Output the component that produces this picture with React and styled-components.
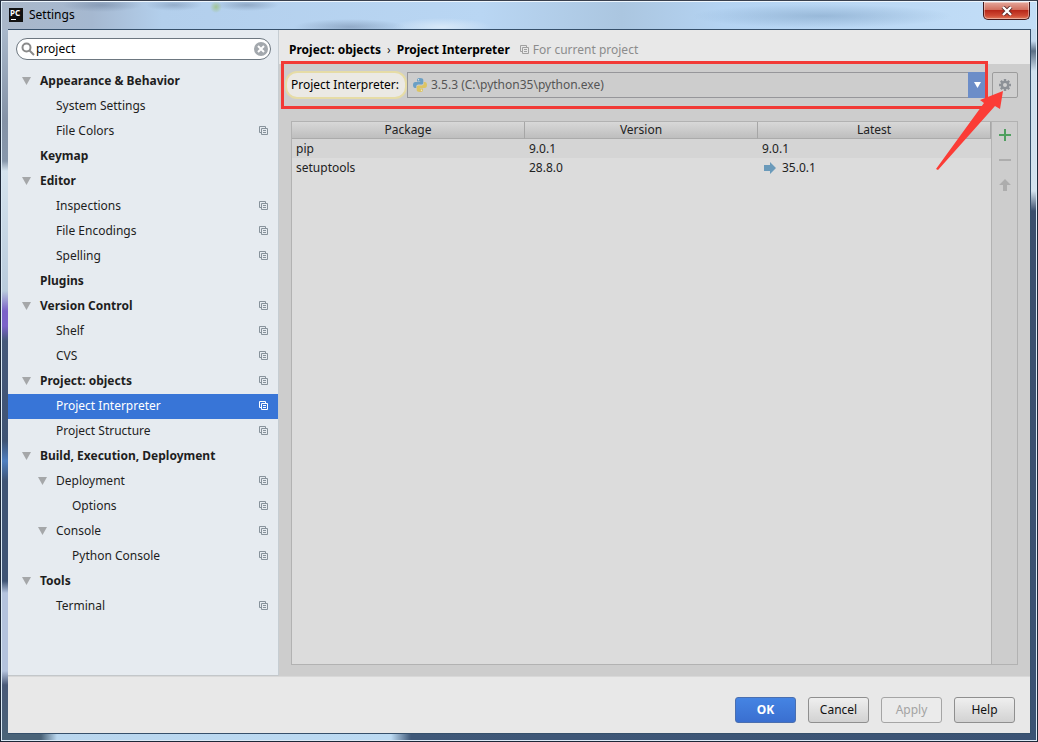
import React, { useState } from "react";
import styled, { createGlobalStyle } from "styled-components";

const GlobalStyle = createGlobalStyle`
  * {
    box-sizing: border-box;
  }
  body {
    margin: 0;
    font-family: "Noto Sans", "Open Sans", sans-serif;
    font-size: 12px;
    line-height: 18px;
    color: #222;
  }
  button,
  input,
  select {
    font: inherit;
    color: inherit;
  }
`;

const Window = styled.div`
  display: flex;
  flex-direction: column;
  min-height: 100vh;
  padding: 0 6px 7px 7px;
  border: 1px solid #1d2838;
  border-top-color: #39404e;
  box-shadow: inset 0 0 0 1px #dcebf7;
  background:
    linear-gradient(to right, #4a6378 40px, #b9d6ee 56px, #bcdaf2 390px, #3f5878 410px, #3b5374)
      bottom / 100% 8px no-repeat,
    linear-gradient(#c3d9ee 0, #c3d9ee 40px, #5b6f85 50px, #cfe0ee 70px, #d3e2ee 190px, #3b4f6d 210px, #3b5374)
      right / 8px 100% no-repeat,
    linear-gradient(
        #b4c4d6 0, #8492a6 120px, #8797ab 160px, #d5e3ee 170px, #b9cbdc 290px,
        #7b62c8 310px, #7b62c8 325px, #46597a 340px, #3f5474 440px, #4f7fc0 460px,
        #3f5474 480px, #3f5474 580px, #b4c3dd 592px, #b4c3dd 670px, #4a5a78 684px, #4a6378
      )
      left / 8px 100% no-repeat,
    #b5cfe9;
`;

const TitleBar = styled.header`
  display: flex;
  align-items: flex-start;
  height: 28px;
  margin: 0 -5px 0 -6px;
  padding: 0 6px 0 7px;
  border-top: 1px solid #eef6fd;
  background:
    radial-gradient(ellipse 40px 7px at 100px 3px, rgba(90, 110, 140, 0.4), transparent),
    radial-gradient(ellipse 28px 6px at 172px 3px, rgba(90, 110, 140, 0.35), transparent),
    radial-gradient(ellipse 6px 6px at 214px 5px, rgba(150, 190, 90, 0.6), transparent),
    radial-gradient(ellipse 32px 6px at 245px 3px, rgba(90, 110, 140, 0.4), transparent),
    radial-gradient(ellipse 56px 8px at 348px 25px, rgba(90, 110, 140, 0.4), transparent),
    radial-gradient(ellipse 50px 9px at 440px 25px, rgba(225, 238, 250, 0.8), transparent),
    radial-gradient(ellipse 130px 12px at 820px 14px, rgba(120, 155, 190, 0.5), transparent),
    linear-gradient(to right, #a9b7c9, #a5b8d0 90px, #b3cfec 160px, #b9d6f3 480px, #abc6e0 620px, #b4d3f2 720px, #c3def7);
`;

const AppIcon = styled.svg`
  width: 14px;
  height: 14px;
  margin: 6px 6px 0 0;
`;

const WindowTitle = styled.h1`
  flex: 1;
  margin: 4px 0 0;
  font-size: 12px;
  font-weight: 400;
  color: #000;
`;

const CloseButton = styled.button`
  display: flex;
  align-items: center;
  justify-content: center;
  width: 47px;
  height: 18px;
  padding: 0;
  border: 1px solid #43181a;
  border-top: 0;
  border-radius: 0 0 5px 5px;
  background: linear-gradient(#e5a89c, #d2705f 45%, #b8281a 50%, #cf4a34 80%, #e07a5c);
  box-shadow: inset 0 0 0 1px rgba(255, 255, 255, 0.4);
`;

const Dialog = styled.div`
  flex: 1;
  display: flex;
  flex-direction: column;
  border: 1px solid #36506b;
  border-width: 1px 1px 1px 0;
  background: #e8e8e8;
`;

const Body = styled.div`
  flex: 1;
  display: flex;
`;

const Sidebar = styled.aside`
  width: 271px;
  flex-shrink: 0;
  border-right: 1px solid #c6cdd2;
  border-bottom: 1px solid #c3c7ca;
  background: #e6ebf0;
`;

const SearchBox = styled.label`
  display: flex;
  align-items: center;
  gap: 1px;
  height: 22px;
  margin: 8px 7px 9px 8px;
  padding: 0 2px 0 4px;
  border: 1px solid #6d7780;
  border-radius: 11px;
  background: #fff;
`;

const SearchInput = styled.input`
  flex: 1;
  min-width: 0;
  padding: 0;
  border: 0;
  outline: 0;
  background: transparent;
  color: #000;
`;

const ClearButton = styled.button`
  display: flex;
  padding: 0;
  border: 0;
  background: none;
`;

const Tree = styled.ul`
  margin: 0;
  padding: 0;
  list-style: none;
`;

const TreeRow = styled.button`
  display: flex;
  align-items: center;
  width: 100%;
  height: 25px;
  padding: 0 10px 2px ${({ $depth }) => 14 + $depth * 16}px;
  border: 0;
  text-align: left;
  font-weight: ${({ $depth }) => ($depth === 0 ? 700 : 400)};
  color: ${({ $selected }) => ($selected ? "#fff" : "#1e1e1e")};
  background: ${({ $selected }) => ($selected ? "#3875d7" : "transparent")};
`;

const Toggle = styled.svg`
  width: 10px;
  height: 8px;
  margin-right: 8px;
  fill: #a5a7a9;
`;

const TreeLabel = styled.span`
  flex: 1;
  white-space: nowrap;
`;

const Main = styled.main`
  flex: 1;
  min-width: 0;
  display: flex;
  flex-direction: column;
  background: #cdcdcd;
`;

const Breadcrumb = styled.div`
  display: flex;
  align-items: center;
  height: 34px;
  padding: 5px 0 0 10px;
  background: #e8e8e8;
  white-space: nowrap;
`;

const Crumb = styled.strong`
  color: #000;
`;

const Chevron = styled.span`
  padding: 0 6px;
`;

const Scope = styled.span`
  display: flex;
  align-items: center;
  gap: 4px;
  margin-left: 10px;
  color: #8c8c8c;
`;

const InterpreterRow = styled.div`
  position: relative;
  display: flex;
  align-items: center;
  padding: 7px 12px 0 6px;
`;

const FieldLabel = styled.label`
  width: 122px;
  height: 28px;
  padding: 3px 0 0 4px;
  border: 2px solid #e6dca6;
  border-radius: 12px;
  background: #ebe9e4;
  color: #000;
  white-space: nowrap;
`;

const Combo = styled.div`
  flex: 1;
  display: flex;
  align-items: center;
  height: 26px;
  padding-left: 4px;
  border: 1px solid #96969a;
  color: #555;
`;

const ComboSelect = styled.select`
  flex: 1;
  min-width: 0;
  height: 24px;
  padding: 0 3px;
  border: 0;
  appearance: none;
  background: transparent;
`;

const ComboArrow = styled.span`
  display: flex;
  align-items: center;
  justify-content: center;
  width: 19px;
  height: 26px;
  background: #6c8dc8;
`;

const GearButton = styled.button`
  display: flex;
  align-items: center;
  justify-content: center;
  width: 26px;
  height: 26px;
  margin-left: 4px;
  padding: 0;
  border: 1px solid #9c9c9c;
  border-radius: 2px;
  background: #cfcfcf;
`;

const Highlight = styled.div`
  position: absolute;
  top: -3px;
  left: 2px;
  right: 42px;
  height: 48px;
  border: 3px solid #f23a36;
  pointer-events: none;
`;

const Pointer = styled.svg`
  position: absolute;
  top: 27px;
  right: 26px;
  width: 68px;
  height: 80px;
  fill: #fb3c36;
  pointer-events: none;
`;

const PackagePanel = styled.section`
  flex: 1;
  display: flex;
  margin: 22px 12px 11px;
  border: 1px solid #b2b2b2;
`;

const TableArea = styled.div`
  flex: 1;
  background: #dcdcdc;
`;

const PackageTable = styled.table`
  width: 100%;
  table-layout: fixed;
  border-collapse: separate;
  border-spacing: 0;
`;

const HeadCell = styled.th`
  height: 17px;
  padding: 0;
  border-right: 1px solid #a6a6a6;
  border-bottom: 1px solid #ababab;
  background: linear-gradient(#d8d8d8, #bebebe);
  font-weight: 400;
  line-height: 16px;
`;

const PackageRow = styled.tr`
  background: ${({ $striped }) => ($striped ? "#d5d5d5" : "transparent")};
`;

const Cell = styled.td`
  height: 19px;
  padding: 0 4px;
  line-height: 19px;
`;

const Upgrade = styled.span`
  display: flex;
  align-items: center;
  gap: 6px;
  padding-left: 2px;
`;

const Actions = styled.div`
  display: flex;
  flex-direction: column;
  width: 26px;
  border-left: 1px solid #b2b2b2;
`;

const ActionButton = styled.button`
  display: flex;
  align-items: center;
  justify-content: center;
  height: 25px;
  padding: 0;
  border: 0;
  background: none;
`;

const Footer = styled.footer`
  display: flex;
  justify-content: flex-end;
  gap: 12px;
  height: 57px;
  padding: 20px 15px 0;
  border-top: 1px solid #d8d8d8;
`;

const DialogButton = styled.button`
  width: 61px;
  height: 26px;
  padding: 0;
  border: 1px solid ${({ $primary }) => ($primary ? "#4a6fb0" : "#8f8f8f")};
  border-radius: 3px;
  background: ${({ $primary }) =>
    $primary ? "linear-gradient(#4584e3, #3a6fd0)" : "linear-gradient(#efefef, #d2d2d2)"};
  color: ${({ $primary }) => ($primary ? "#fff" : "#111")};
  font-weight: ${({ $primary }) => ($primary ? 700 : 400)};

  &:disabled {
    border-color: #a5a5a5;
    background: #ebebeb;
    color: #a3a3a3;
  }
`;

const CopyIcon = ({ color = "#87929b" }) => (
  <svg width="9" height="9" viewBox="0 0 9 9" fill="none" stroke={color}>
    <path d="M2.5 6.5h-2v-6h6v2" />
    <path d="M2.5 2.5h6v6h-6z" />
    <path d="M4 4.5h3M4 6.5h3" />
  </svg>
);

const PythonIcon = () => (
  <svg width="16" height="16" viewBox="0 0 16 16">
    <path
      fill="#6b9fc4"
      d="M7.8 1C5.4 1 5 2 5 3v1.5h3.2V5H3.3C1.900 5 1 6.200 1 8s.900 3 2 3h1.300V9.500c0-1.200.900-2 2-2h3.200c1 0 1.800-.800 1.800-1.800V3c0-1.200-1-2-3.500-2z"
    />
    <path
      fill="#dcc463"
      d="M8.200 15c2.400 0 2.800-1 2.800-2v-1.500H7.800V11h4.900c1.400 0 2.300-1.200 2.300-3s-.900-3-2-3h-1.300v1.500c0 1.200-.900 2-2 2H6.500c-1 0-1.800.800-1.800 1.800V13c0 1.200 1 2 3.500 2z"
    />
    <circle cx="6.500" cy="2.800" r=".7" fill="#dde6ec" />
    <circle cx="9.500" cy="13.200" r=".7" fill="#f2ecd0" />
  </svg>
);

const GearIcon = () => (
  <svg width="14" height="14" viewBox="0 0 14 14">
    <g stroke="#8d9197" strokeWidth="2.400">
      <path d="M7 1v12M1 7h12M2.800 2.800l8.400 8.400M11.200 2.800l-8.400 8.400" />
    </g>
    <circle cx="7" cy="7" r="4.300" fill="#8d9197" />
    <circle cx="7" cy="7" r="2" fill="#cfcfcf" />
  </svg>
);

const items = [
  { label: "Appearance & Behavior", depth: 0, open: true },
  { label: "System Settings", depth: 1 },
  { label: "File Colors", depth: 1, project: true },
  { label: "Keymap", depth: 0 },
  { label: "Editor", depth: 0, open: true },
  { label: "Inspections", depth: 1, project: true },
  { label: "File Encodings", depth: 1, project: true },
  { label: "Spelling", depth: 1, project: true },
  { label: "Plugins", depth: 0 },
  { label: "Version Control", depth: 0, open: true, project: true },
  { label: "Shelf", depth: 1, project: true },
  { label: "CVS", depth: 1, project: true },
  { label: "Project: objects", depth: 0, open: true, project: true },
  { label: "Project Interpreter", depth: 1, project: true },
  { label: "Project Structure", depth: 1, project: true },
  { label: "Build, Execution, Deployment", depth: 0, open: true },
  { label: "Deployment", depth: 1, open: true, project: true },
  { label: "Options", depth: 2, project: true },
  { label: "Console", depth: 1, open: true, project: true },
  { label: "Python Console", depth: 2, project: true },
  { label: "Tools", depth: 0, open: true },
  { label: "Terminal", depth: 1, project: true },
];

const packages = [
  { name: "pip", version: "9.0.1", latest: "9.0.1" },
  { name: "setuptools", version: "28.8.0", latest: "35.0.1", outdated: true },
];

const SettingsTree = () => {
  const [selected, setSelected] = useState("Project Interpreter");
  return (
    <Tree>
      {items.map(({ label, depth, open, project }) => (
        <li key={label}>
          <TreeRow
            type="button"
            $depth={depth}
            $selected={label === selected}
            onClick={() => setSelected(label)}
          >
            <Toggle viewBox="0 0 10 8">{open && <path d="M0 0h9L4.500 8z" />}</Toggle>
            <TreeLabel>{label}</TreeLabel>
            {project && <CopyIcon color={label === selected ? "#fff" : undefined} />}
          </TreeRow>
        </li>
      ))}
    </Tree>
  );
};

const Packages = () => (
  <PackagePanel>
    <TableArea>
      <PackageTable>
        <thead>
          <tr>
            <HeadCell>Package</HeadCell>
            <HeadCell>Version</HeadCell>
            <HeadCell>Latest</HeadCell>
          </tr>
        </thead>
        <tbody>
          {packages.map(({ name, version, latest, outdated }, i) => (
            <PackageRow key={name} $striped={i % 2 === 0}>
              <Cell>{name}</Cell>
              <Cell>{version}</Cell>
              <Cell>
                {outdated ? (
                  <Upgrade>
                    <svg width="12" height="12" viewBox="0 0 12 12" fill="#6a9aba">
                      <path d="M0 3h6V0l6 6l-6 6V9H0z" />
                    </svg>
                    {latest}
                  </Upgrade>
                ) : (
                  latest
                )}
              </Cell>
            </PackageRow>
          ))}
        </tbody>
      </PackageTable>
    </TableArea>
    <Actions>
      <ActionButton type="button" aria-label="Install">
        <svg width="12" height="12" viewBox="0 0 12 12" stroke="#4f9f5f" strokeWidth="2">
          <path d="M6 0v12M0 6h12" />
        </svg>
      </ActionButton>
      <ActionButton type="button" aria-label="Uninstall">
        <svg width="12" height="12" viewBox="0 0 12 12" stroke="#adadad" strokeWidth="2">
          <path d="M0 6h12" />
        </svg>
      </ActionButton>
      <ActionButton type="button" aria-label="Upgrade">
        <svg width="12" height="12" viewBox="0 0 12 12" fill="#adadad">
          <path d="M6 0l6 6H8v6H4V6H0z" />
        </svg>
      </ActionButton>
    </Actions>
  </PackagePanel>
);

const App = () => {
  const [query, setQuery] = useState("project");
  return (
    <>
      <GlobalStyle />
      <Window>
        <TitleBar>
          <AppIcon viewBox="0 0 14 14">
            <rect width="14" height="14" fill="#111" />
            <text x="1" y="8" fontSize="8" fontWeight="700" fill="#fff">
              PC
            </text>
            <path d="M2 11.500h5" stroke="#fff" />
          </AppIcon>
          <WindowTitle>Settings</WindowTitle>
          <CloseButton type="button" aria-label="Close">
            <svg width="12" height="10" viewBox="0 0 12 10">
              <path d="M2 1l8 8M10 1L2 9" stroke="#5a2a2a" strokeWidth="4" />
              <path d="M2 1l8 8M10 1L2 9" stroke="#fff" strokeWidth="2.400" />
            </svg>
          </CloseButton>
        </TitleBar>
        <Dialog>
          <Body>
            <Sidebar>
              <SearchBox>
                <svg width="14" height="14" viewBox="0 0 14 14" fill="none" stroke="#8a8a8a" strokeWidth="2">
                  <circle cx="5.500" cy="5.500" r="4" />
                  <path d="M8.500 8.500L13 13" />
                </svg>
                <SearchInput
                  aria-label="Search settings"
                  value={query}
                  onChange={(e) => setQuery(e.target.value)}
                />
                <ClearButton type="button" aria-label="Clear" onClick={() => setQuery("")}>
                  <svg width="14" height="14" viewBox="0 0 14 14">
                    <circle cx="7" cy="7" r="7" fill="#a3a8ad" />
                    <path d="M4 4l6 6M10 4l-6 6" stroke="#fff" strokeWidth="2" />
                  </svg>
                </ClearButton>
              </SearchBox>
              <SettingsTree />
            </Sidebar>
            <Main>
              <Breadcrumb>
                <Crumb>Project: objects</Crumb>
                <Chevron>›</Chevron>
                <Crumb>Project Interpreter</Crumb>
                <Scope>
                  <CopyIcon color="#a0a0a0" />
                  For current project
                </Scope>
              </Breadcrumb>
              <InterpreterRow>
                <FieldLabel htmlFor="interpreter">Project Interpreter:</FieldLabel>
                <Combo>
                  <PythonIcon />
                  <ComboSelect id="interpreter">
                    <option>3.5.3 (C:\python35\python.exe)</option>
                  </ComboSelect>
                  <ComboArrow>
                    <svg width="7" height="6" viewBox="0 0 7 6" fill="#fff">
                      <path d="M0 0h7L3.500 6z" />
                    </svg>
                  </ComboArrow>
                </Combo>
                <GearButton type="button" aria-label="Interpreter options">
                  <GearIcon />
                </GearButton>
                <Highlight />
                <Pointer viewBox="0 0 68 80">
                  <path d="M67 0L64 18L59 15L2 79L0 78L48 12L44 9z" />
                </Pointer>
              </InterpreterRow>
              <Packages />
            </Main>
          </Body>
          <Footer>
            <DialogButton type="button" $primary>
              OK
            </DialogButton>
            <DialogButton type="button">Cancel</DialogButton>
            <DialogButton type="button" disabled>
              Apply
            </DialogButton>
            <DialogButton type="button">Help</DialogButton>
          </Footer>
        </Dialog>
      </Window>
    </>
  );
};

export default App;
